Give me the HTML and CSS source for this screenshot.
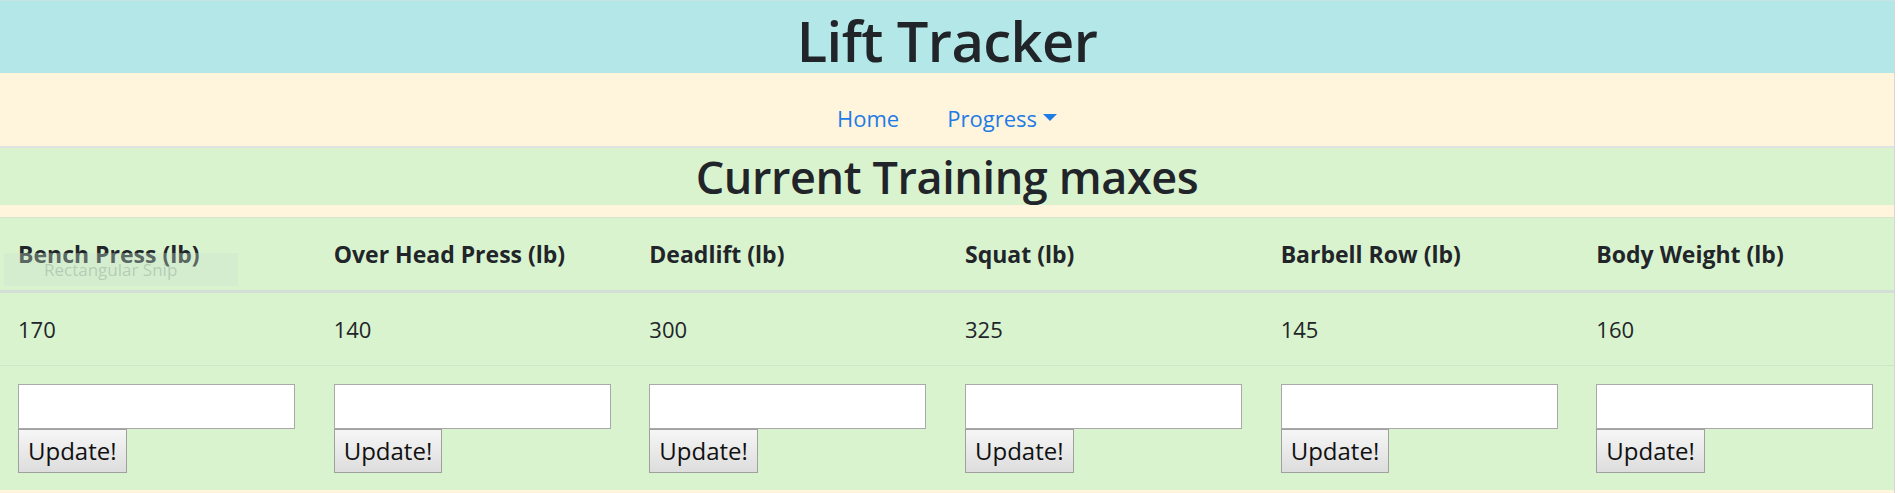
FILE: index.html
```html
<!DOCTYPE html>
<html lang="en">
<head>
<meta charset="utf-8">
<title>Lift Tracker</title>
<link rel="stylesheet" href="styles.css">
</head>
<body>
<div class="page">
  <header class="site-header">
    <h1 class="title">Lift Tracker</h1>
  </header>
  <nav class="site-nav">
    <ul class="nav-list">
      <li><a class="nav-link" href="#">Home</a></li>
      <li><a class="nav-link dropdown-toggle" href="#">Progress</a></li>
    </ul>
  </nav>
  <section class="heading-band">
    <h2 class="subtitle">Current Training maxes</h2>
  </section>
  <div class="spacer"></div>
  <section class="maxes">
    <div class="row head-row">
      <div class="cell">Bench Press (lb)</div>
      <div class="cell">Over Head Press (lb)</div>
      <div class="cell">Deadlift (lb)</div>
      <div class="cell">Squat (lb)</div>
      <div class="cell">Barbell Row (lb)</div>
      <div class="cell">Body Weight (lb)</div>
    </div>
    <div class="row value-row">
      <div class="cell">170</div>
      <div class="cell">140</div>
      <div class="cell">300</div>
      <div class="cell">325</div>
      <div class="cell">145</div>
      <div class="cell">160</div>
    </div>
    <div class="row form-row">
      <div class="cell"><input class="field" type="text"><button class="btn" type="button">Update!</button></div>
      <div class="cell"><input class="field" type="text"><button class="btn" type="button">Update!</button></div>
      <div class="cell"><input class="field" type="text"><button class="btn" type="button">Update!</button></div>
      <div class="cell"><input class="field" type="text"><button class="btn" type="button">Update!</button></div>
      <div class="cell"><input class="field" type="text"><button class="btn" type="button">Update!</button></div>
      <div class="cell"><input class="field" type="text"><button class="btn" type="button">Update!</button></div>
    </div>
    <div class="snip-tip">Rectangular Snip</div>
  </section>
  <div class="floor"></div>
</div>
</body>
</html>
```
FILE: styles.css
```css
* { box-sizing: border-box; }
html, body { margin: 0; padding: 0; }
body {
  background: #ffffff;
  font-family: "Open Sans", "Noto Sans", sans-serif;
  font-size: 22px;
  line-height: 1.5;
  color: #212529;
}
.page {
  width: 1895px;
  border-top: 1px solid #c9e2e2;
  border-right: 1px solid #d6d6d6;
  background: #fef5dc;
}
.site-header {
  background: #b4e8e8;
  height: 72px;
  display: flex;
  justify-content: center;
  align-items: center;
  padding-top: 5px;
}
.title {
  margin: 0;
  font-size: 56px;
  font-weight: 600;
  line-height: 66px;
  letter-spacing: -0.6px;
}
.site-nav {
  background: #fef5dc;
  height: 75px;
  border-bottom: 2px solid #e2e2e0;
  padding-top: 27px;
}
.nav-list {
  list-style: none;
  margin: 0;
  padding: 0;
  display: flex;
  justify-content: center;
}
.nav-link {
  display: block;
  padding: 0 24px;
  line-height: 36px;
  color: #1f7be6;
  text-decoration: none;
}
.dropdown-toggle::after {
  content: "";
  display: inline-block;
  margin-left: 6px;
  vertical-align: 6px;
  border-top: 7px solid #1f7be6;
  border-left: 7px solid transparent;
  border-right: 7px solid transparent;
}
.heading-band {
  background: #daf3cf;
  height: 57px;
  display: flex;
  justify-content: center;
  align-items: center;
}
.subtitle {
  margin: 0;
  font-size: 45px;
  font-weight: 600;
  line-height: 57px;
  letter-spacing: -0.4px;
}
.spacer {
  height: 12px;
  background: #fef5dc;
}
.maxes {
  position: relative;
  background: #daf3cf;
}
.row {
  display: grid;
  grid-template-columns: repeat(6, 1fr);
}
.cell {
  padding: 18px;
}
.head-row {
  border-top: 1px solid #d4e6cf;
  border-bottom: 3px solid #d2dfd6;
  font-weight: 700;
  font-size: 23px;
}
.head-row .cell {
  line-height: 36px;
}
.value-row {
  border-bottom: 1px solid #cfe6c6;
}
.value-row .cell {
  line-height: 36px;
}
.form-row .cell {
  display: flex;
  flex-direction: column;
  align-items: flex-start;
  padding-bottom: 17px;
}
.field {
  width: 277px;
  height: 45px;
  margin: 0;
  border: 1px solid #a9a9a9;
  background: #ffffff;
  font: inherit;
}
.btn {
  height: 44px;
  margin: 0;
  padding: 0 9px;
  border: 1px solid #a0a0a0;
  background: linear-gradient(#f6f6f6, #dddddd);
  font-family: inherit;
  font-size: 24px;
  line-height: 36px;
  color: #111;
}
.snip-tip {
  position: absolute;
  left: 4px;
  top: 36px;
  width: 234px;
  height: 33px;
  padding-left: 40px;
  background: rgba(200, 225, 205, 0.35);
  color: rgba(120, 140, 130, 0.35);
  font-size: 17px;
  line-height: 33px;
  pointer-events: none;
}
.floor {
  height: 3px;
  background: #fef5dc;
}
```
